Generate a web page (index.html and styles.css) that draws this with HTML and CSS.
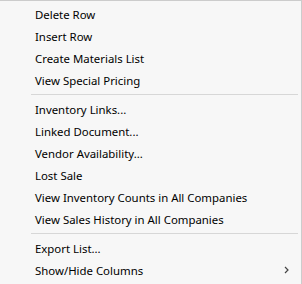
FILE: index.html
```html
<!DOCTYPE html>
<html>
<head>
    <title>Context Menu</title>
    <meta name="viewport" content="width=device-width, initial-scale=1">
    <link rel="stylesheet" href="styles.css">
</head>
<body>
    <ul class="menu">
        <li class="item">Delete Row</li>
        <li class="item">Insert Row</li>
        <li class="item">Create Materials List</li>
        <li class="item">View Special Pricing</li>
        <li class="sep"></li>
        <li class="item">Inventory Links...</li>
        <li class="item">Linked Document...</li>
        <li class="item">Vendor Availability...</li>
        <li class="item">Lost Sale</li>
        <li class="item">View Inventory Counts in All Companies</li>
        <li class="item">View Sales History in All Companies</li>
        <li class="sep"></li>
        <li class="item">Export List...</li>
        <li class="item has-sub">Show/Hide Columns
            <svg class="arrow" width="5" height="8" viewBox="0 0 5 8"><path d="M1 1 L4 4 L1 7" fill="none" stroke="#444" stroke-width="1.2"/></svg>
        </li>
    </ul>
</body>
</html>
```

FILE: styles.css
```css
body {
    margin: 0;
    background: #f7f7f7;
}
.menu {
    list-style: none;
    margin: 0;
    padding: 2px 0 2px 0;
    width: 301px;
    height: 279px;
    background: #f7f7f7;
    border-top: 1px solid #cccccc;
    border-right: 1px solid #cccccc;
    border-bottom: 1px solid #cccccc;
    font-family: "Noto Sans", "Open Sans", sans-serif;
    font-size: 11.4px;
    color: #000;
}
.item {
    display: flex;
    align-items: center;
    justify-content: space-between;
    height: 22px;
    padding: 0 12px 0 35px;
}
.sep {
    height: 1px;
    margin: 3px 3px 3px 31px;
    background: #d7d7d7;
}
.arrow {
    display: block;
}
```
